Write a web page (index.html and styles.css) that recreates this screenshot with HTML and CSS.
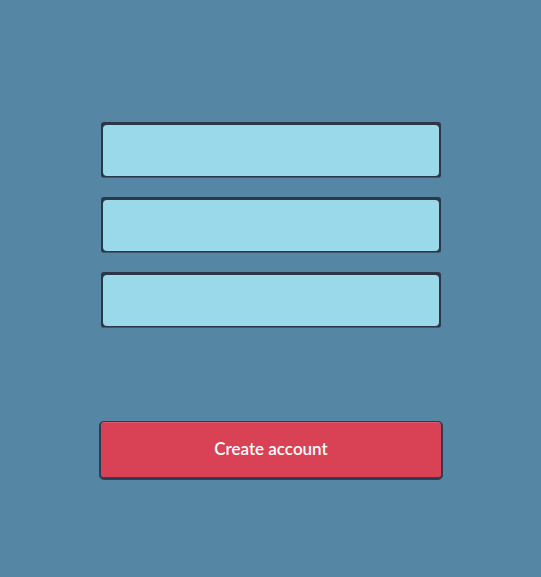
FILE: index.html
```html
<!DOCTYPE html>
<html lang="en">
<head>
<meta charset="utf-8">
<meta name="viewport" content="width=device-width, initial-scale=1">
<title>Create account</title>
<link rel="stylesheet" href="styles.css">
</head>
<body>
<form class="signup">
  <div class="fields">
    <div class="frame"><input class="field" type="text" name="name" aria-label="Name"></div>
    <div class="frame"><input class="field" type="email" name="email" aria-label="Email"></div>
    <div class="frame"><input class="field" type="password" name="password" aria-label="Password"></div>
  </div>
  <button class="submit" type="submit">Create account</button>
</form>
</body>
</html>
```
FILE: styles.css
```css
* {
  box-sizing: border-box;
}

body {
  margin: 0;
  min-height: 100vh;
  background: #5586a4;
  font-family: Lato, "Liberation Sans", sans-serif;
}

.signup {
  display: flex;
  flex-direction: column;
  gap: 93px;
  padding: 122px 98px 96px 99px;
}

.fields {
  display: grid;
  gap: 19px;
  padding: 0 2px;
}

.frame {
  display: flex;
  padding: 3px 2px 1px;
  border-bottom: 1px solid #40566d;
  border-radius: 3px;
  background: #2c3749;
}

.field {
  width: 100%;
  height: 51px;
  margin: 0;
  padding: 0 16px;
  border: 0;
  border-radius: 4px;
  background: #99d9ea;
  color: #2c3749;
  font: inherit;
  outline: none;
}

.submit {
  height: 59px;
  padding: 0 16px 1px;
  border: 2px solid #2f3c51;
  border-top-width: 1px;
  border-bottom-width: 3px;
  border-radius: 5px;
  background: #d94255;
  box-shadow: inset 0 1px #e0586d;
  color: #fff;
  font: 600 17px/24px Lato, "Liberation Sans", sans-serif;
  cursor: pointer;
}
```
